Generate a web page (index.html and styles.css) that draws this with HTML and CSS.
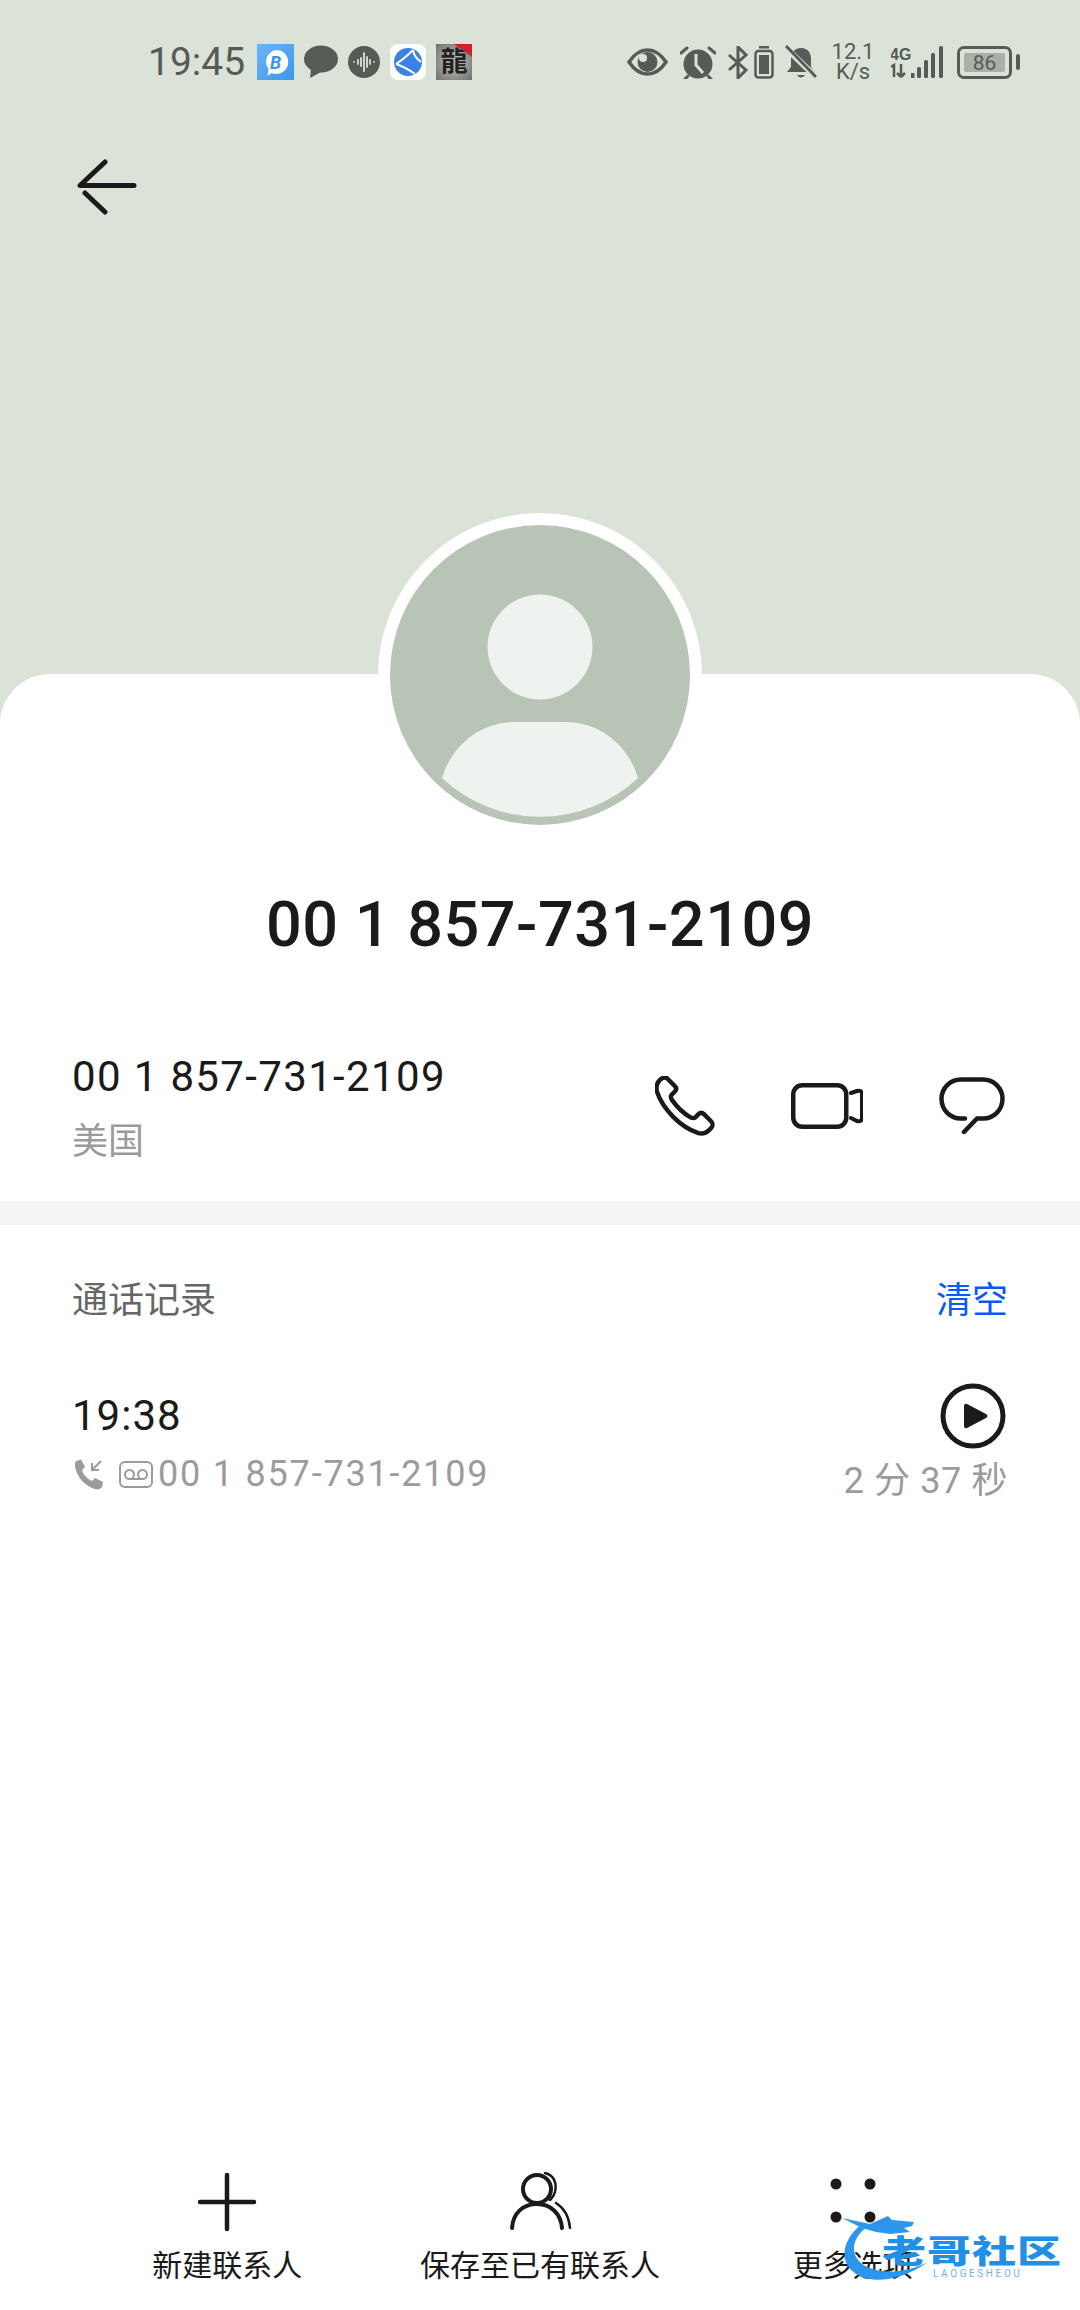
FILE: index.html
```html
<!DOCTYPE html>
<html>
<head>
<meta http-equiv="Content-Type" content="text/html; charset=utf-8"/>
<title>通话详情</title>
<link rel="stylesheet" href="styles.css">
</head>

<body>
<div class="screen">

  <div class="top">
    <div class="statusbar">
      <div class="status-left">
        <span class="clock">19:45</span>
        <svg class="ic" width="37" height="36" viewBox="0 0 37 36">
          <defs><linearGradient id="blue" x1="0" y1="0" x2="1" y2="1"><stop offset="0" stop-color="#6db6f5"/><stop offset="1" stop-color="#3a94ee"/></linearGradient></defs>
          <rect width="37" height="36" fill="url(#blue)"/>
          <path d="M18.500 6a12 12 0 1 1-4 23l-4 3 1-7a12 12 0 0 1 7-19z" fill="#fff"/>
          <text class="bt-letter" x="18.500" y="24.500" text-anchor="middle">B</text>
        </svg>
        <svg class="ic" width="34" height="34" viewBox="0 0 34 34">
          <ellipse cx="17" cy="14" rx="17" ry="13.500" fill="#565b55"/>
          <path d="M7 24l-1 9 11-6z" fill="#565b55"/>
        </svg>
        <svg class="ic" width="32" height="32" viewBox="0 0 32 32">
          <circle cx="16" cy="16" r="16" fill="#565b55"/>
          <path d="M6 16v0M10 14v4M13 12v8M16 7v18M19 11v10M22 14v4M26 16v0" stroke="#dbe3d9" stroke-width="1.800" stroke-linecap="round"/>
        </svg>
        <svg class="ic" width="36" height="36" viewBox="0 0 36 36">
          <rect width="36" height="36" rx="8" fill="#fff"/>
          <circle cx="18" cy="18" r="14" fill="#3a82e6"/>
          <path d="M6 20Q14 15 23 6M6 20Q15 23 25 30M23 6Q24 13 31 18" stroke="#fff" stroke-width="2" fill="none"/>
        </svg>
        <div class="thumb"><span>龍</span></div>
      </div>

      <div class="status-right">
        <svg width="41" height="28" viewBox="0 0 41 28">
          <path d="M2 14C8 5 14 2 20.500 2S33 5 39 14C33 23 27 26 20.500 26S8 23 2 14z" fill="none" stroke="#565b55" stroke-width="3.500"/>
          <circle cx="20.500" cy="14" r="10" fill="#565b55"/>
          <circle cx="16" cy="10" r="4" fill="#dbe3d9"/>
        </svg>
        <svg class="gap-12" width="36" height="33" viewBox="0 0 36 33">
          <circle cx="18" cy="18" r="14.500" fill="#565b55"/>
          <path d="M16 8v11l7 8" fill="none" stroke="#dbe3d9" stroke-width="3"/>
          <path d="M1 7l6-5M35 7l-6-5M8 30l-3 3M28 30l3 3" stroke="#565b55" stroke-width="3" stroke-linecap="round"/>
        </svg>
        <svg class="gap-12" width="21" height="33" viewBox="0 0 21 33">
          <path d="M1 9l17 15-8 8V1l8 8L1 24" fill="none" stroke="#565b55" stroke-width="3"/>
        </svg>
        <svg class="gap-5" width="20" height="33" viewBox="0 0 20 33">
          <rect x="5" y="0" width="10" height="2.500" fill="#565b55"/>
          <rect x="1.500" y="5" width="17" height="26.500" rx="3" fill="none" stroke="#565b55" stroke-width="2.500"/>
          <rect x="5" y="9" width="10" height="19" fill="#565b55"/>
        </svg>
        <svg width="32" height="35" viewBox="0 0 32 35">
          <path d="M16 3c7 0 10 5 10 11v8l4 5H2l4-5v-8c0-6 3-11 10-11z" fill="#565b55"/>
          <path d="M12 30a4.500 4.500 0 0 0 8 0z" fill="#565b55"/>
          <path d="M0 2l32 31" stroke="#dbe3d9" stroke-width="6"/>
          <path d="M1 1l30 31" stroke="#565b55" stroke-width="3"/>
        </svg>
        <div class="speed"><span>12.1</span><span>K/s</span></div>
        <svg class="gap-18" width="53" height="34" viewBox="0 0 53 34">
          <text class="net" x="-1" y="15">4G</text>
          <path d="M0 22l3-2v12M10 19v12M10 32l4-4M10 32l-4-4" fill="none" stroke="#565b55" stroke-width="2.500"/>
          <rect x="20" y="28" width="3.500" height="5" fill="#565b55"/>
          <rect x="26" y="22" width="4" height="11" rx="1.500" fill="#565b55"/>
          <rect x="33" y="15" width="4" height="18" rx="1.500" fill="#565b55"/>
          <rect x="40" y="8" width="4" height="25" rx="1.500" fill="#565b55"/>
          <rect x="48" y="1" width="4" height="32" rx="1.500" fill="#565b55"/>
        </svg>
        <div class="battery">
          <div class="battery-body"><span>86</span></div>
          <div class="battery-tip"></div>
        </div>
      </div>
    </div>

    <svg class="back" width="62" height="56" viewBox="0 0 62 56">
      <path d="M29 3L4 26.500H58M9 34L29 53" fill="none" stroke="#1a1a1a" stroke-width="5" stroke-linecap="round" stroke-linejoin="round"/>
    </svg>
  </div>

  <div class="sheet">
    <div class="avatar">
      <svg width="300" height="300" viewBox="0 0 300 300">
        <circle cx="150" cy="150" r="150" fill="#b8c4b6"/>
        <circle cx="150" cy="122" r="52.500" fill="#eff3f0"/>
        <path d="M248 253C238 220 210 197 175 197H125C90 197 62 220 52 253A143 143 0 0 0 248 253z" fill="#eff3f0"/>
      </svg>
    </div>

    <h1 class="title">00 1 857-731-2109</h1>

    <div class="contact">
      <div>
        <div class="number">00 1 857-731-2109</div>
        <div class="region">美国</div>
      </div>
      <div class="actions">
        <svg width="60" height="60" viewBox="0 0 61 61">
          <path d="M5 4C8 1 11 1 13 3L20 10C22 12 22 14 20 16L17 19C16 20 16 22 17 24C22 31 29 38 36 42C38 43 40 43 41 42L44 39C46 37 48 37 50 39L57 46C59 48 59 51 57 53L55 55C52 58 48 59 44 58C26 52 8 34 2 16C1 12 2 7 5 4Z" fill="none" stroke="#1a1a1a" stroke-width="4.500"/>
        </svg>
        <svg width="72" height="46" viewBox="0 0 72 46">
          <rect x="2.250" y="2.250" width="53" height="41.500" rx="9" fill="none" stroke="#1a1a1a" stroke-width="4.500"/>
          <path d="M60 10L66 8Q71 7 71 11V35Q71 39 66 38L60 35" fill="none" stroke="#1a1a1a" stroke-width="4" stroke-linecap="round"/>
        </svg>
        <svg width="66" height="57" viewBox="0 0 66 57">
          <path d="M26 41.500H22A19.500 19.500 0 0 1 22 2.500H44A19.500 19.500 0 0 1 44 41.500H38L25 55" fill="none" stroke="#1a1a1a" stroke-width="4.500" stroke-linecap="round"/>
        </svg>
      </div>
    </div>

    <div class="band"></div>

    <div class="section-head">
      <span class="section-title">通话记录</span>
      <span class="clear">清空</span>
    </div>

    <div class="log">
      <div class="log-left">
        <div class="log-time">19:38</div>
        <div class="log-sub">
          <svg width="31" height="31" viewBox="0 0 31 31">
            <path d="M2 2L7 0.500L11 8L8 11C9 15 13 20 18 22L21 19L29 23L28 28C26 31 22 31 18 29C9 25 3 17 1 8C1 5 1 3 2 2z" fill="#9b9b9b"/>
            <path d="M27 2L18 11M18 4V11H25" fill="none" stroke="#9b9b9b" stroke-width="2"/>
          </svg>
          <svg class="vm" width="34" height="27" viewBox="0 0 34 27">
            <rect x="1" y="1" width="32" height="25" rx="5" fill="none" stroke="#9b9b9b" stroke-width="2"/>
            <circle cx="10.500" cy="13.500" r="4.500" fill="none" stroke="#9b9b9b" stroke-width="2"/>
            <circle cx="23.500" cy="13.500" r="4.500" fill="none" stroke="#9b9b9b" stroke-width="2"/>
            <path d="M10.500 18H23.500" stroke="#9b9b9b" stroke-width="2"/>
          </svg>
          <span>00 1 857-731-2109</span>
        </div>
      </div>
      <div class="log-right">
        <svg width="66" height="66" viewBox="0 0 66 66">
          <circle cx="33" cy="33" r="30" fill="none" stroke="#1a1a1a" stroke-width="5"/>
          <path d="M27 21L46 31Q49 33 46 35L27 45Q24 46 24 43V23Q24 20 27 21z" fill="#1a1a1a"/>
        </svg>
        <div class="duration">2 分 37 秒</div>
      </div>
    </div>

    <div class="toolbar">
      <div class="tool">
        <svg width="60" height="60" viewBox="0 0 60 60">
          <path d="M30 3V57M3 30H57" stroke="#1a1a1a" stroke-width="4.500" stroke-linecap="round"/>
        </svg>
        <span>新建联系人</span>
      </div>
      <div class="tool">
        <svg width="68" height="60" viewBox="0 0 68 60">
          <circle cx="31" cy="17" r="14" fill="none" stroke="#1a1a1a" stroke-width="4"/>
          <path d="M6 56C7 41 17 32 31 32S55 42 56 56" fill="none" stroke="#1a1a1a" stroke-width="4" stroke-linecap="round"/>
          <path d="M39 1C48 3 51 11 49 20C48 24 46 26 44 28M50 31C58 36 63 45 64 56" fill="none" stroke="#1a1a1a" stroke-width="2.500" stroke-linecap="round"/>
        </svg>
        <span>保存至已有联系人</span>
      </div>
      <div class="tool">
        <svg width="56" height="60" viewBox="0 0 56 60">
          <circle cx="11" cy="12" r="5.500" fill="#1a1a1a"/>
          <circle cx="45" cy="12" r="5.500" fill="#1a1a1a"/>
          <circle cx="11" cy="45" r="5.500" fill="#1a1a1a"/>
          <circle cx="45" cy="45" r="5.500" fill="#1a1a1a"/>
        </svg>
        <span>更多选项</span>
      </div>
    </div>
  </div>

  <!-- forum watermark stamped over the toolbar -->
  <div class="watermark">
    <svg class="wm-mark" width="95" height="72" viewBox="0 0 95 72">
      <path d="M22 10C6 22 0 40 8 52C18 68 50 74 88 48C60 62 30 60 18 46C10 36 14 22 28 12Z" fill="#2b96ee"/>
      <path d="M2 4L30 10L48 2L52 6L74 8L72 12L64 14L70 18L50 20L36 18L22 14Z" fill="#2b96ee"/>
    </svg>
    <div class="wm-name">老哥社区</div>
    <div class="wm-sub">LAOGESHEOU</div>
  </div>

</div>
</body>

</html>
```

FILE: styles.css
```css
body {
  margin: 0;
  background-color: white;
  font-family: Roboto, "Noto Sans CJK SC", sans-serif;
  color: #1a1a1a;
}

svg {
  display: block;
  flex: none;
}

.screen {
  position: relative;
  display: flex;
  flex-direction: column;
  width: 1080px;
  height: 2310px;
  overflow: hidden;
  background-color: #dbe3d9;
}

.top {
  height: 674px;
  flex: none;
}

/* status bar */
.statusbar {
  display: flex;
  justify-content: space-between;
  align-items: center;
  height: 124px;
  padding: 0 60px 0 148px;
  color: #565b55;
}

.status-left, .status-right {
  display: flex;
  align-items: center;
  gap: 11px;
}

.status-left {
  gap: 10px;
}

.clock {
  font-size: 39px;
  margin-right: 2px;
}

.bt-letter {
  font-family: Roboto, sans-serif;
  font-size: 18px;
  font-weight: 700;
  font-style: italic;
  fill: #3a94ee;
}

.thumb {
  position: relative;
  width: 36px;
  height: 36px;
  overflow: hidden;
  background: radial-gradient(circle, #b5b5b0 20%, #6e6e6c 100%);
  text-align: center;
}

.thumb span {
  font-size: 27px;
  line-height: 36px;
  font-weight: 700;
  color: #222;
}

.thumb:after {
  content: "";
  position: absolute;
  top: 0;
  right: 0;
  border-top: 13px solid #c8242b;
  border-left: 18px solid transparent;
}

.gap-12 { margin-left: 1px; }
.gap-5 { margin-left: -6px; }
.gap-18 { margin-left: 7px; }

.speed {
  display: flex;
  flex-direction: column;
  align-items: center;
  width: 40px;
  margin-left: 5px;
  font-size: 22px;
  line-height: 20px;
}

.net {
  font-family: "Liberation Sans", sans-serif;
  font-size: 16px;
  font-weight: 700;
  fill: #565b55;
}

.battery {
  display: flex;
  align-items: center;
  gap: 4px;
  margin-left: 2px;
}

.battery-body {
  box-sizing: border-box;
  width: 55px;
  height: 33px;
  padding: 4px;
  border: 3px solid #565b55;
  border-radius: 7px;
}

.battery-body span {
  display: block;
  width: 41px;
  height: 19px;
  background-color: #a9b0a7;
  border-radius: 2px;
  font-size: 21px;
  line-height: 20px;
  text-align: center;
}

.battery-tip {
  width: 4px;
  height: 16px;
  background-color: #565b55;
  border-radius: 2px;
}

.back {
  margin: 35px 0 0 76px;
}

/* white sheet */
.sheet {
  flex: 1;
  display: flex;
  flex-direction: column;
  background-color: white;
  border-radius: 50px 50px 0 0;
}

.avatar {
  box-sizing: border-box;
  width: 324px;
  height: 324px;
  margin: -161px auto 0;
  border: 12px solid white;
  border-radius: 50%;
  background-color: white;
}

.title {
  margin: 48px 0 0;
  font-size: 63px;
  line-height: 80px;
  font-weight: 500;
  letter-spacing: 0.5px;
  text-align: center;
}

.contact {
  display: flex;
  justify-content: space-between;
  align-items: center;
  padding: 84px 75px 29px 72px;
}

.number {
  font-size: 42px;
  line-height: 56px;
  letter-spacing: 1.35px;
}

.region {
  margin-top: 7px;
  font-size: 36px;
  line-height: 60px;
  color: #9b9b9b;
}

.actions {
  display: flex;
  align-items: center;
  gap: 76px;
  margin-bottom: 10px;
}

.band {
  height: 24px;
  background-color: #f5f5f5;
}

.section-head {
  display: flex;
  justify-content: space-between;
  padding: 51px 72px 0 72px;
  font-size: 36px;
  line-height: 50px;
}

.section-title {
  color: #666;
}

.clear {
  color: #0a59f7;
}

.log {
  display: flex;
  justify-content: space-between;
  padding: 57px 74px 0 72px;
}

.log-left {
  padding-top: 8px;
}

.log-time {
  font-size: 42px;
  line-height: 50px;
  letter-spacing: 1px;
}

.log-sub {
  display: flex;
  align-items: center;
  margin: 3px 0 0 2px;
  font-size: 36px;
  line-height: 60px;
  letter-spacing: 1.8px;
  color: #9b9b9b;
}

.vm {
  margin: 0 5px 0 14px;
}

.log-right {
  display: flex;
  flex-direction: column;
  align-items: flex-end;
}

.duration {
  margin: 7px -2px 0 0;
  font-size: 36px;
  line-height: 50px;
  letter-spacing: 0.6px;
  color: #9b9b9b;
}

.toolbar {
  display: grid;
  grid-template-columns: repeat(3, 1fr);
  margin-top: auto;
  padding: 0 71px 22px;
}

.tool {
  display: flex;
  flex-direction: column;
  align-items: center;
  gap: 12px;
  font-size: 30px;
  line-height: 44px;
}

/* watermark */
.watermark {
  position: absolute;
  left: 840px;
  top: 2214px;
  width: 224px;
  height: 72px;
}

.wm-mark {
  position: absolute;
  left: 0;
  top: 0;
}

.wm-name {
  position: absolute;
  left: 42px;
  top: 13px;
  font-size: 44px;
  line-height: 50px;
  font-weight: 900;
  letter-spacing: 1px;
  white-space: nowrap;
  color: #1f8fe8;
  transform: scaleY(0.72);
}

.wm-sub {
  position: absolute;
  left: 93px;
  top: 55px;
  font-size: 10px;
  line-height: 10px;
  letter-spacing: 2.6px;
  color: #6fb2ea;
}
```
